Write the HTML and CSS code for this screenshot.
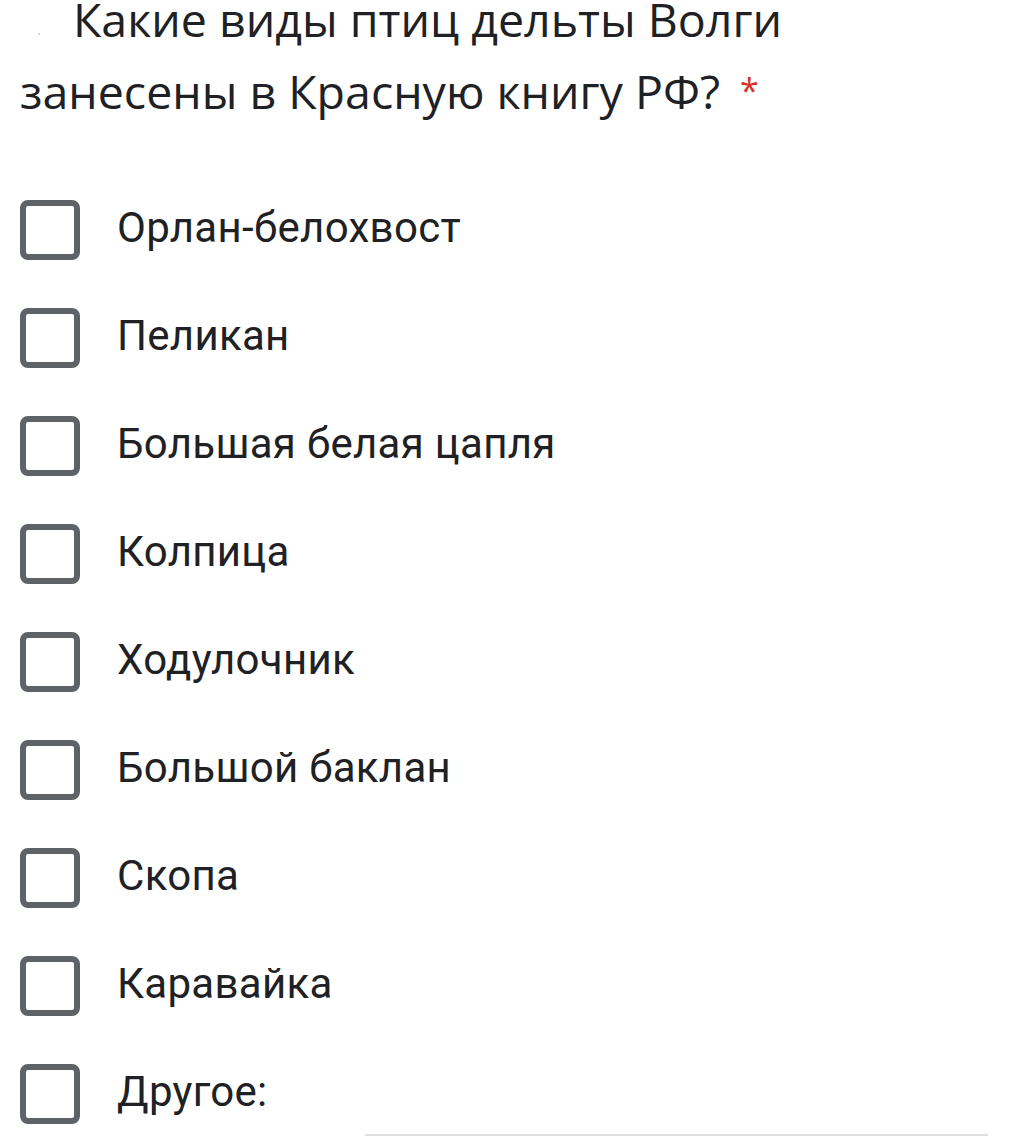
FILE: index.html
```html
<!DOCTYPE html>
<html lang="ru">
<head>
<meta charset="utf-8">
<link rel="stylesheet" href="styles.css">
</head>
<body>
<div class="form">
  <div class="title"><span class="speck"></span>Какие виды птиц дельты Волги занесены в Красную книгу РФ?<span class="req">*</span></div>
  <div class="options">
    <div class="option"><span class="box"></span><span class="label">Орлан-белохвост</span></div>
    <div class="option"><span class="box"></span><span class="label">Пеликан</span></div>
    <div class="option"><span class="box"></span><span class="label">Большая белая цапля</span></div>
    <div class="option"><span class="box"></span><span class="label">Колпица</span></div>
    <div class="option"><span class="box"></span><span class="label">Ходулочник</span></div>
    <div class="option"><span class="box"></span><span class="label">Большой баклан</span></div>
    <div class="option"><span class="box"></span><span class="label">Скопа</span></div>
    <div class="option"><span class="box"></span><span class="label">Каравайка</span></div>
    <div class="option other"><span class="box"></span><span class="label">Другое:</span><span class="line"></span></div>
  </div>
</div>
</body>
</html>
```
FILE: styles.css
```css
html, body {
  margin: 0;
  background: #ffffff;
}
.form {
  padding: 0 20px;
  width: 1022px;
  box-sizing: border-box;
  overflow: hidden;
  height: 1145px;
}
.title {
  font-family: "Open Sans", sans-serif;
  font-size: 46.5px;
  line-height: 71px;
  color: #202124;
  text-indent: 53px;
  margin-top: -16px;
  width: 820px;
  position: relative;
}
.speck {
  position: absolute;
  left: 18px;
  top: 49px;
  width: 2px;
  height: 2px;
  background: #c8c8c8;
  border-radius: 1px;
}
.req {
  color: #d93025;
  margin-left: 20px;
  font-size: 34px;
  vertical-align: 6px;
}
.options {
  display: flex;
  flex-direction: column;
  margin-top: 49px;
}
.option {
  display: flex;
  align-items: center;
  height: 108px;
}
.box {
  width: 48px;
  height: 48px;
  border: 6px solid #5f6368;
  border-radius: 8px;
  flex: none;
}
.label {
  font-family: Roboto, sans-serif;
  font-size: 42px;
  color: #202124;
  margin-left: 37px;
  margin-bottom: 5px;
  letter-spacing: 0.3px;
}
.other {
  position: relative;
}
.line {
  position: absolute;
  left: 345px;
  right: 14px;
  bottom: 12px;
  height: 2px;
  background: #e0e0e0;
}
```
